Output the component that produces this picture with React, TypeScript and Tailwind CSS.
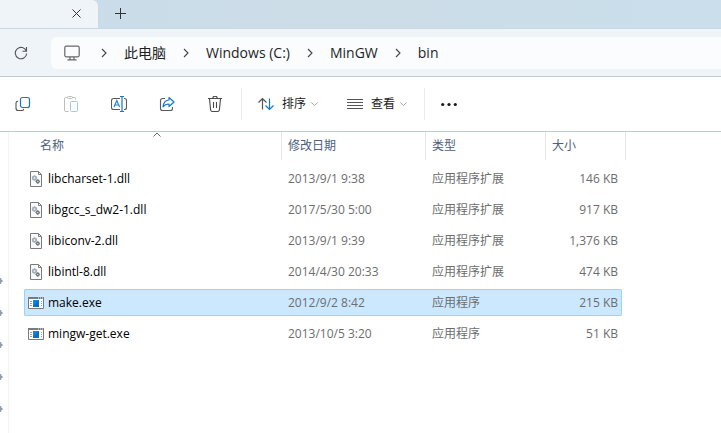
import React, { useState } from 'react';

interface FileItem {
  name: string;
  date: string;
  type: string;
  size: string;
  kind: 'dll' | 'exe';
}

const files: FileItem[] = [
  { name: 'libcharset-1.dll', date: '2013/9/1 9:38', type: '应用程序扩展', size: '146 KB', kind: 'dll' },
  { name: 'libgcc_s_dw2-1.dll', date: '2017/5/30 5:00', type: '应用程序扩展', size: '917 KB', kind: 'dll' },
  { name: 'libiconv-2.dll', date: '2013/9/1 9:39', type: '应用程序扩展', size: '1,376 KB', kind: 'dll' },
  { name: 'libintl-8.dll', date: '2014/4/30 20:33', type: '应用程序扩展', size: '474 KB', kind: 'dll' },
  { name: 'make.exe', date: '2012/9/2 8:42', type: '应用程序', size: '215 KB', kind: 'exe' },
  { name: 'mingw-get.exe', date: '2013/10/5 3:20', type: '应用程序', size: '51 KB', kind: 'exe' },
];

const crumbs = ['此电脑', 'Windows (C:)', 'MinGW', 'bin'];
const pins = [1, 2, 3, 4, 5];

function Chevron({ className }: { className: string }) {
  return (
    <svg className={className} viewBox="0 0 8 10" fill="none" stroke="currentColor" strokeWidth="1.1" aria-hidden="true">
      <path d="M2 1l4 4-4 4" />
    </svg>
  );
}

function DllIcon() {
  return (
    <svg className="h-4 w-4 shrink-0" viewBox="0 0 16 16" fill="none" aria-hidden="true">
      <path d="M2.5.5h8l3 3v12h-11z" fill="#fafafa" stroke="#7b7b7b" />
      <path d="M10.5.5v3h3" stroke="#7b7b7b" />
      <circle cx="6.5" cy="7" r="1.7" stroke="#a3afba" strokeWidth="1.7" />
      <path d="M6.5 4.300v1M6.500 8.700v1M3.800 7h1M8.200 7h1M4.600 5.100l.7.7M8.400 5.100l-.7.7M4.600 8.900l.7-.7" stroke="#a3afba" />
      <circle cx="9.800" cy="10.500" r="1.300" fill="#fff" stroke="#6f7b87" strokeWidth="1.400" />
      <path d="M9.800 8.200v.8M9.800 12v.8M7.500 10.500h.8M11.300 10.500h.8" stroke="#6f7b87" />
    </svg>
  );
}

function ExeIcon() {
  return (
    <svg className="h-4 w-4 shrink-0" viewBox="0 0 16 16" fill="none" aria-hidden="true">
      <path d="M.5 2.5h15v11H.5z" fill="#fff" stroke="#7a7a7a" />
      <path d="M0 2h16v2H0z" fill="#7a7a7a" />
      <path d="M10 3h1M12 3h1M14 3h1" stroke="#eee" />
      <path d="M2 6.5h2M2 8.5h2M2 10.5h2M13 6.5h1M13 8.5h1M13 10.5h1" stroke="#9a9a9a" />
      <path d="M5 5h6v7H5z" fill="#0a6cc7" />
      <path d="M5 5h6L5 11z" fill="#1581db" />
    </svg>
  );
}

function CopyIcon() {
  return (
    <svg className="h-4 w-4" viewBox="0 0 16 16" fill="none" aria-hidden="true">
      <path d="M3.2 5.2H3A2 2 0 0 0 1 7.2v5A2.3 2.3 0 0 0 3.3 14.5h3.4A2 2 0 0 0 8.7 12.8" stroke="#555" strokeWidth="1.1" />
      <rect x="5.5" y="1.5" width="9" height="10" rx="2" stroke="#1478cf" strokeWidth="1.2" />
    </svg>
  );
}

function PasteIcon() {
  return (
    <svg className="h-4 w-4" viewBox="0 0 16 16" fill="none" aria-hidden="true">
      <path d="M4.5 1.5h-2a1 1 0 0 0-1 1v12a1 1 0 0 0 1 1h3M9.5 1.5h2a1 1 0 0 1 1 1v1" stroke="#bcbcbc" />
      <rect x="4.5" y=".5" width="5" height="2" rx="1" stroke="#bcbcbc" />
      <rect x="7.5" y="5.5" width="7" height="10" rx="1" stroke="#9ccbec" />
    </svg>
  );
}

function RenameIcon() {
  return (
    <svg className="h-4 w-4" viewBox="0 0 16 16" fill="none" aria-hidden="true">
      <path d="M9 2.5H2.500a2 2 0 0 0-2 2v7a2 2 0 0 0 2 2H9M13 2.5h.5a2 2 0 0 1 2 2v7a2 2 0 0 1-2 2H13" stroke="#5a5a5a" strokeWidth="1.1" />
      <path d="M3 11l2.8-6.500L8.600 11M3.900 9h3.800" stroke="#2b85d4" strokeWidth="1.2" />
      <path d="M11 .5v15M9 .5h4M9 15.500h4" stroke="#1478cf" strokeWidth="1.2" />
    </svg>
  );
}

function ShareIcon() {
  return (
    <svg className="h-4 w-4" viewBox="0 0 16 16" fill="none" aria-hidden="true">
      <path d="M6 2.5H3.500a2 2 0 0 0-2 2v8a2 2 0 0 0 2 2h8a2 2 0 0 0 2-2V11" stroke="#5a5a5a" strokeWidth="1.1" />
      <path d="M10 1.500l5 4.500-5 4.500V8C7.200 8 5.500 8.800 4 10.800 4.400 7 6.600 4.200 10 4z" stroke="#1478cf" strokeWidth="1.2" strokeLinejoin="round" />
    </svg>
  );
}

function TrashIcon() {
  return (
    <svg className="h-4 w-4" viewBox="0 0 16 16" fill="none" stroke="#4a4a4a" strokeWidth="1.1" aria-hidden="true">
      <path d="M1 2.500h14M5.800 2.300a2.200 2.200 0 0 1 4.400 0M2.500 2.700l1.100 11.100a1.900 1.900 0 0 0 1.900 1.700h5a1.900 1.900 0 0 0 1.900-1.700l1.100-11.100M6.500 6v6M9.500 6v6" />
    </svg>
  );
}

function SortIcon() {
  return (
    <svg className="h-4 w-4" viewBox="0 0 16 16" fill="none" strokeWidth="1.2" aria-hidden="true">
      <path d="M4.5 13.5v-11M.5 6.500l4-4 4 4" stroke="#555" />
      <path d="M11.5 2.5v11M7.500 9.500l4 4 4-4" stroke="#1478cf" />
    </svg>
  );
}

const actions = [
  { label: '复制', icon: <CopyIcon />, disabled: false },
  { label: '粘贴', icon: <PasteIcon />, disabled: true },
  { label: '重命名', icon: <RenameIcon />, disabled: false },
  { label: '共享', icon: <ShareIcon />, disabled: false },
  { label: '删除', icon: <TrashIcon />, disabled: false },
];

function TabBar() {
  return (
    <div className="flex h-7 bg-linear-to-r from-[#c9dcea] via-[#ccdde7] to-[#cadeec]">
      <div className="flex w-[98px] items-center justify-end rounded-tr-md bg-[#eff4f8] pr-4">
        <button aria-label="关闭标签页" className="text-[#333]">
          <svg className="h-[10px] w-[10px]" viewBox="0 0 10 10" fill="none" stroke="currentColor" aria-hidden="true">
            <path d="M.5 .5l8 8M8.500 .5l-8 8" />
          </svg>
        </button>
      </div>
      <button aria-label="新建标签页" className="px-4 text-[#333]">
        <svg className="h-3 w-3" viewBox="0 0 12 12" fill="none" stroke="currentColor" aria-hidden="true">
          <path d="M6.5 0v11M1 5.500h11" />
        </svg>
      </button>
    </div>
  );
}

function AddressBar() {
  return (
    <div className="flex h-12 items-center border-t border-[#c9d9e3] bg-[#eff4f8]">
      <button aria-label="刷新" className="flex w-[51px] shrink-0 pl-[14px] text-[#555]">
        <svg className="h-[14px] w-[14px]" viewBox="0 0 14 14" fill="none" stroke="currentColor" strokeWidth="1.1" aria-hidden="true">
          <path d="M12.4 5.200A5.700 5.700 0 1 0 12.700 7.500M12.500 1v4.300H8.500" />
        </svg>
      </button>
      <nav aria-label="路径" className="flex h-8 flex-1 items-center rounded-l-md bg-[#fafcfe] pl-[13px] text-sm text-[#1f1f1f]">
        <svg className="mr-1 h-4 w-4" viewBox="0 0 16 16" fill="none" stroke="#666" strokeWidth="1.2" aria-hidden="true">
          <rect x=".8" y="1.2" width="14.4" height="10.6" rx="1.5" />
          <path d="M6 12v2.500M10 12v2.500M3.500 14.800h9" />
        </svg>
        {crumbs.map((c) => (
          <React.Fragment key={c}>
            <Chevron className="mx-4 h-[10px] w-2 shrink-0 text-[#444]" />
            <a href="#" className="whitespace-nowrap">{c}</a>
          </React.Fragment>
        ))}
      </nav>
    </div>
  );
}

function Toolbar() {
  return (
    <div className="flex h-14 items-center border-y border-[#b9cad8] bg-white text-xs text-[#1a1a1a]">
      <div className="flex gap-8 pl-[15px]">
        {actions.map((a) => (
          <button key={a.label} aria-label={a.label} disabled={a.disabled}>
            {a.icon}
          </button>
        ))}
      </div>
      <div className="ml-[18px] flex h-8 items-center gap-7 border-x border-[#ebebeb] px-4">
        <button className="flex items-center gap-2 whitespace-nowrap">
          <SortIcon />
          <span>排序</span>
          <Chevron className="-ml-1 h-2 w-[9px] rotate-90 text-[#999]" />
        </button>
        <button className="flex items-center gap-2 whitespace-nowrap">
          <svg className="h-4 w-4" viewBox="0 0 16 16" fill="none" stroke="#555" aria-hidden="true">
            <path d="M0 3.500h16M0 6.500h16M0 9.500h16M0 12.500h16" />
          </svg>
          <span>查看</span>
          <Chevron className="-ml-1 h-2 w-[9px] rotate-90 text-[#999]" />
        </button>
      </div>
      <button aria-label="更多" className="ml-4">
        <svg className="h-4 w-4" viewBox="0 0 16 16" fill="#1a1a1a" aria-hidden="true">
          <circle cx="1.7" cy="8.5" r="1.6" />
          <circle cx="8" cy="8.5" r="1.6" />
          <circle cx="14.3" cy="8.5" r="1.6" />
        </svg>
      </button>
    </div>
  );
}

export default function App() {
  const [selected, setSelected] = useState('make.exe');

  const cell = (name: string) =>
    `flex h-[27px] items-center ${
      name === selected ? 'border-y border-[#99d1ff] bg-[#cce8ff]' : 'border-y border-transparent'
    }`;

  return (
    <div className="flex min-h-screen flex-col overflow-hidden bg-white font-['Open_Sans','Noto_Sans_CJK_SC',sans-serif]">
      <TabBar />
      <AddressBar />
      <Toolbar />

      <div className="flex flex-1">
        {/* Navigation pane */}
        <aside className="w-[9px] shrink-0 overflow-hidden border-r border-[#f3f3f3] pt-[133px]">
          {pins.map((p) => (
            <div key={p} className="flex h-8 items-center">
              <svg className="h-2 w-1" viewBox="0 0 4 8" fill="#949ea8" aria-hidden="true">
                <path d="M0 1h1l.5 1.800L3.200 4 1.500 5.200 1 7H0z" />
              </svg>
            </div>
          ))}
        </aside>

        <main className="min-w-0 flex-1 pl-[15px]">
          <table className="w-[602px] table-fixed border-collapse text-xs text-[#6d6d6d]">
            <colgroup>
              <col className="w-[258px]" />
              <col className="w-[144px]" />
              <col className="w-[120px]" />
              <col className="w-[80px]" />
            </colgroup>
            <thead className="text-left text-[#4c607a]">
              <tr className="align-top">
                <th className="p-0 pb-[3px] font-normal">
                  <div className="relative flex h-7 items-center border-r border-[#e5e5e5] pl-4">
                    名称
                    <svg className="absolute left-[129px] top-0 h-[5px] w-2" viewBox="0 0 8 5" fill="none" stroke="#666" aria-hidden="true">
                      <path d="M.5 4.500L4 1l3.500 3.500" />
                    </svg>
                  </div>
                </th>
                {['修改日期', '类型', '大小'].map((h) => (
                  <th key={h} className="p-0 pb-[3px] font-normal">
                    <div className="flex h-7 items-center border-r border-[#e5e5e5] pl-[6px]">{h}</div>
                  </th>
                ))}
              </tr>
            </thead>
            <tbody className="cursor-default">
              {files.map((f) => (
                <tr key={f.name} onClick={() => setSelected(f.name)} aria-selected={f.name === selected}>
                  <td className="px-0 py-[2px]">
                    <div className={`${cell(f.name)} gap-1 rounded-l-xs border-l pl-[3px] text-black`}>
                      {f.kind === 'dll' ? <DllIcon /> : <ExeIcon />}
                      {f.name}
                    </div>
                  </td>
                  <td className="px-0 py-[2px]">
                    <div className={`${cell(f.name)} pl-[6px]`}>{f.date}</div>
                  </td>
                  <td className="px-0 py-[2px]">
                    <div className={`${cell(f.name)} pl-[6px]`}>{f.type}</div>
                  </td>
                  <td className="py-[2px] pl-0 pr-1">
                    <div className={`${cell(f.name)} justify-end rounded-r-xs border-r pr-[3px]`}>{f.size}</div>
                  </td>
                </tr>
              ))}
            </tbody>
          </table>
        </main>
      </div>
    </div>
  );
}
